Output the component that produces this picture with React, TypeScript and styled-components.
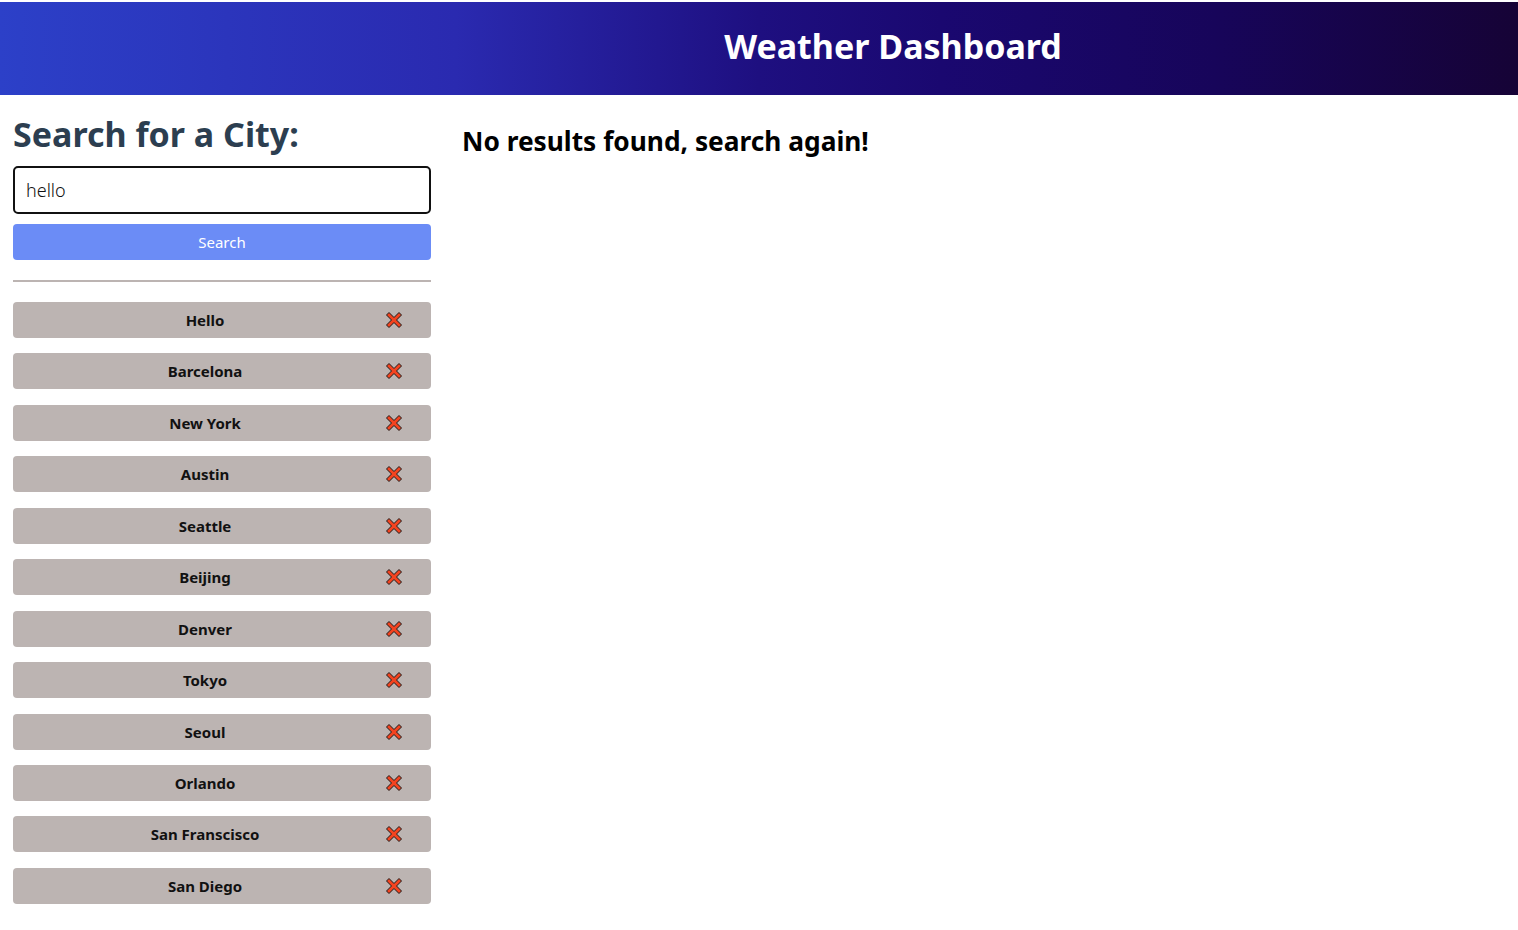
import React from 'react'
import styled, { createGlobalStyle } from 'styled-components'

const GlobalStyle = createGlobalStyle`
  body {
    margin: 0;
    background: #ffffff;
    font-family: 'Noto Sans', 'Open Sans', sans-serif;
  }
`

const Page = styled.div`
  width: 100%;
  min-height: 930px;
`

const Header = styled.header`
  margin-top: 2px;
  height: 93px;
  display: flex;
  align-items: center;
  justify-content: center;
  padding: 0 0 6px 268px;
  box-sizing: border-box;
  background: linear-gradient(90deg, #2c40c8 0%, #2a2ab0 30%, #1e0f80 50%, #1a0870 62%, #17055a 80%, #160336 100%);
`

const Title = styled.h1`
  margin: 0;
  color: #ffffff;
  font-size: 34px;
  font-weight: 700;
`

const Body = styled.div`
  display: flex;
  gap: 31px;
  padding: 0 13px;
`

const Sidebar = styled.aside`
  width: 418px;
  flex-shrink: 0;
  display: flex;
  flex-direction: column;
`

const Heading = styled.h2`
  margin: 17px 0 10px;
  color: #2c3e50;
  font-size: 34px;
  font-weight: 700;
  line-height: 44px;
`

const Input = styled.input`
  height: 48px;
  box-sizing: border-box;
  border: 2px solid #111111;
  border-radius: 5px;
  padding: 0 11px;
  font-family: inherit;
  font-size: 18px;
  font-weight: 300;
  color: #111111;
  outline: none;
`

const SearchButton = styled.button`
  margin-top: 10px;
  height: 36px;
  border: none;
  border-radius: 4px;
  background: #6b8cf6;
  color: #ffffff;
  font-family: inherit;
  font-size: 15px;
`

const Divider = styled.hr`
  margin: 20px 0 20px;
  border: none;
  height: 2px;
  background: #bcb4b2;
`

const CityList = styled.ul`
  list-style: none;
  margin: 0;
  padding: 0;
  display: flex;
  flex-direction: column;
  gap: 15.45px;
`

const CityItem = styled.li`
  height: 36px;
  display: flex;
  align-items: center;
  border-radius: 4px;
  background: #bcb4b2;
`

const CityName = styled.span`
  flex: 1;
  text-align: center;
  font-size: 15px;
  font-weight: 700;
  color: #111111;
`

const Remove = styled.svg`
  width: 18px;
  height: 18px;
  margin-left: -12px;
  margin-right: 28px;
`

const Main = styled.main`
  flex: 1;
`

const Message = styled.h3`
  margin: 28px 0 0;
  font-size: 26.3px;
  font-weight: 700;
  color: #000000;
`

const cities = [
  'Hello',
  'Barcelona',
  'New York',
  'Austin',
  'Seattle',
  'Beijing',
  'Denver',
  'Tokyo',
  'Seoul',
  'Orlando',
  'San Franscisco',
  'San Diego',
]

const CrossIcon = () => (
  <Remove viewBox="0 0 18 18">
    <path
      d="M1.5 4 L4 1.5 L9 6.5 L14 1.5 L16.5 4 L11.5 9 L16.5 14 L14 16.5 L9 11.5 L4 16.5 L1.5 14 L6.5 9 Z"
      fill="#f4431f"
      stroke="#1a1a1a"
      strokeWidth="1"
      strokeLinejoin="round"
    />
  </Remove>
)

const App = () => {
  return (
    <Page>
      <GlobalStyle />
      <Header>
        <Title>Weather Dashboard</Title>
      </Header>
      <Body>
        <Sidebar>
          <Heading>Search for a City:</Heading>
          <Input defaultValue="hello" />
          <SearchButton>Search</SearchButton>
          <Divider />
          <CityList>
            {cities.map((city) => (
              <CityItem key={city}>
                <CityName>{city}</CityName>
                <CrossIcon />
              </CityItem>
            ))}
          </CityList>
        </Sidebar>
        <Main>
          <Message>No results found, search again!</Message>
        </Main>
      </Body>
    </Page>
  )
}

export default App
